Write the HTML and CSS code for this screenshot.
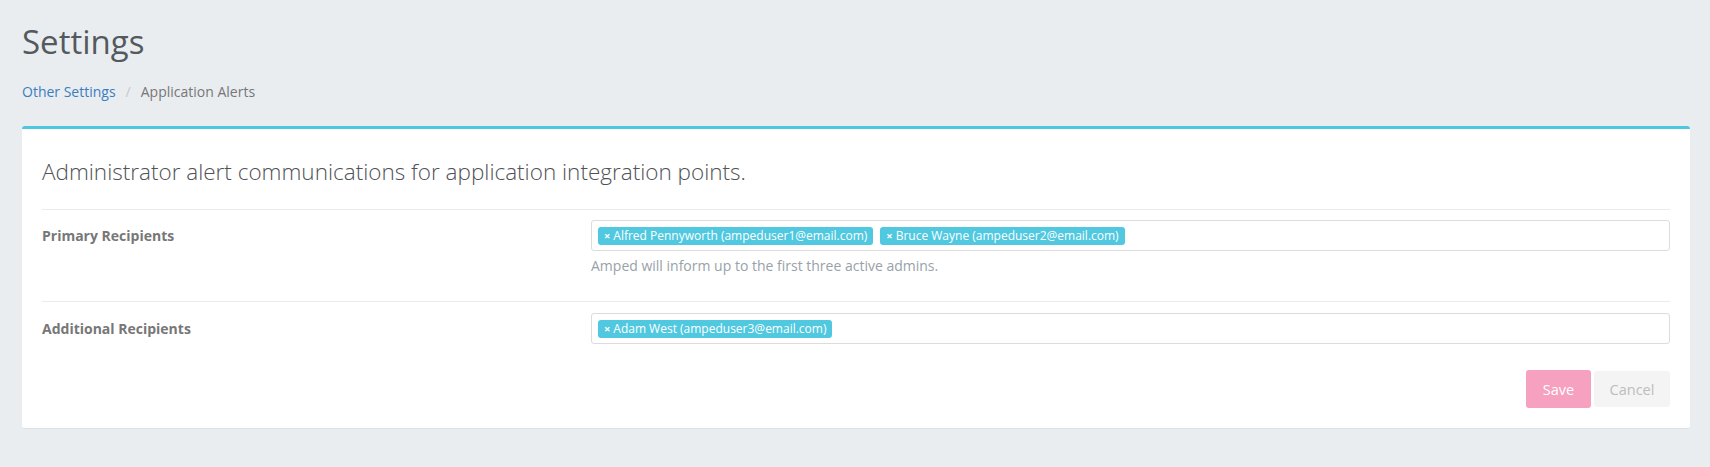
FILE: index.html
```html
<!DOCTYPE html>
<html lang="en">
<head>
<meta charset="utf-8">
<title>Settings</title>
<link rel="stylesheet" href="styles.css">
</head>
<body>
<div class="page">
  <h1 class="page-title">Settings</h1>
  <ol class="breadcrumb">
    <li><a href="#" class="crumb-link">Other Settings</a></li>
    <li class="crumb-sep">/</li>
    <li class="crumb-current">Application Alerts</li>
  </ol>
  <section class="card">
    <h2 class="card-title">Administrator alert communications for application integration points.</h2>
    <div class="form-row">
      <label class="form-label">Primary Recipients</label>
      <div class="form-field">
        <div class="tag-input">
          <span class="tag"><span class="tag-x">×</span>Alfred Pennyworth (ampeduser1@email.com)</span>
          <span class="tag"><span class="tag-x">×</span>Bruce Wayne (ampeduser2@email.com)</span>
        </div>
        <p class="help">Amped will inform up to the first three active admins.</p>
      </div>
    </div>
    <div class="form-row last">
      <label class="form-label">Additional Recipients</label>
      <div class="form-field">
        <div class="tag-input">
          <span class="tag"><span class="tag-x">×</span>Adam West (ampeduser3@email.com)</span>
        </div>
      </div>
    </div>
    <div class="actions">
      <button class="btn btn-save">Save</button>
      <button class="btn btn-cancel">Cancel</button>
    </div>
  </section>
</div>
</body>
</html>
```

FILE: styles.css
```css
* { box-sizing: border-box; }
html, body { margin: 0; padding: 0; }
body {
  background: #e9edf0;
  font-family: "Open Sans", "Noto Sans", sans-serif;
  color: #555;
  height: 467px;
}
.page {
  padding: 0 20px 0 22px;
}
.page-title {
  margin: 0;
  padding-top: 20px;
  font-size: 33px;
  font-weight: 400;
  line-height: 44px;
  color: #54595d;
}
.breadcrumb {
  list-style: none;
  margin: 0;
  padding: 18px 0 0;
  display: flex;
  gap: 10px;
  font-size: 14px;
  line-height: 20px;
  height: 62px;
}
.crumb-link { color: #3b7dbf; text-decoration: none; }
.crumb-sep { color: #c8c8c8; }
.crumb-current { color: #777; }
.card {
  background: #fff;
  border-top: 3px solid #4dc6e0;
  border-bottom: 1px solid #dde1e5;
  border-radius: 3px;
  padding: 0 20px 20px;
}
.card-title {
  margin: 0;
  font-size: 22.5px;
  font-weight: 300;
  color: #4f5256;
  line-height: 30px;
  padding: 28px 0 22px;
  border-bottom: 1px solid #ebebeb;
}
.form-row {
  display: grid;
  grid-template-columns: 549px 1fr;
  padding: 10px 0 25px;
  border-bottom: 1px solid #ebebeb;
}
.form-row.last { border-bottom: none; padding-top: 11px; padding-bottom: 0; }
.form-label {
  font-size: 14px;
  font-weight: 700;
  color: #777;
  line-height: 31px;
}
.tag-input {
  border: 1px solid #dcdcdc;
  border-radius: 3px;
  height: 31px;
  padding: 6px 6px;
  display: flex;
  gap: 7px;
  align-items: flex-start;
}
.tag {
  background: #4fc8e0;
  color: #fff;
  font-size: 12px;
  line-height: 18px;
  height: 18px;
  padding: 0 6px;
  border-radius: 3px;
  white-space: nowrap;
}
.tag-x { font-weight: 700; margin-right: 3px; font-size: 11px; }
.help {
  margin: 5px 0 0;
  font-size: 14px;
  line-height: 20px;
  color: #97a2a9;
}
.actions {
  display: flex;
  justify-content: flex-end;
  gap: 3px;
  margin-top: 26px;
}
.btn {
  border: none;
  border-radius: 3px;
  font-family: inherit;
  font-size: 14.5px;
  height: 38px;
  padding: 0 10px;
}
.btn-save { background: #f6a1c0; color: #fff; width: 65px; }
.btn-cancel { background: #f4f4f4; color: #bdbdbd; width: 76px; height: 36px; margin-top: 1px; }
```
